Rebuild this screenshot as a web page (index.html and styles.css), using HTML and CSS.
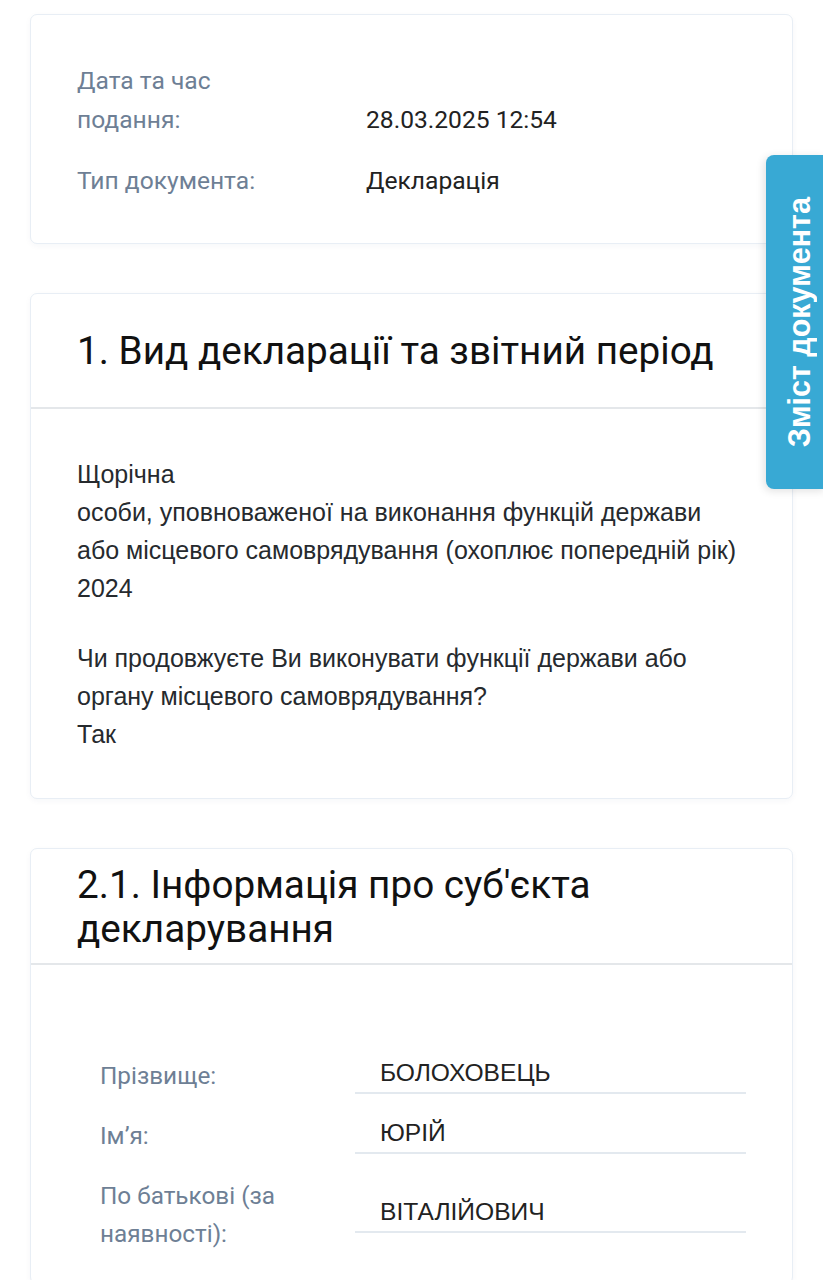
FILE: index.html
```html
<!DOCTYPE html>
<html lang="uk">
<head>
<meta charset="utf-8">
<link rel="stylesheet" href="styles.css">
</head>
<body>
<div class="page">
  <section class="card meta">
    <div class="meta-row">
      <div class="meta-label">Дата та час<br>подання:</div>
      <div class="meta-value">28.03.2025 12:54</div>
    </div>
    <div class="meta-row">
      <div class="meta-label">Тип документа:</div>
      <div class="meta-value">Декларація</div>
    </div>
  </section>

  <section class="card">
    <header class="card-head one-line">
      <h2>1. Вид декларації та звітний період</h2>
    </header>
    <div class="card-body text">
      <p>Щорічна<br>особи, уповноваженої на виконання функцій держави або місцевого самоврядування (охоплює попередній рік)<br>2024</p>
      <p>Чи продовжуєте Ви виконувати функції держави або органу місцевого самоврядування?<br>Так</p>
    </div>
  </section>

  <section class="card">
    <header class="card-head">
      <h2>2.1. Інформація про суб'єкта декларування</h2>
    </header>
    <div class="card-body person">
      <div class="field">
        <div class="field-label">Прізвище:</div>
        <div class="field-value">БОЛОХОВЕЦЬ</div>
      </div>
      <div class="field">
        <div class="field-label">Ім’я:</div>
        <div class="field-value">ЮРІЙ</div>
      </div>
      <div class="field">
        <div class="field-label">По батькові (за наявності):</div>
        <div class="field-value">ВІТАЛІЙОВИЧ</div>
      </div>
    </div>
  </section>
</div>
<div class="toc-tab"><span>Зміст документа</span></div>
</body>
</html>
```
FILE: styles.css
```css
* { box-sizing: border-box; }
html, body { margin: 0; padding: 0; background: #ffffff; }
body {
  font-family: "Liberation Sans", Arial, sans-serif;
  color: #1f2328;
  width: 823px;
  overflow: hidden;
}
.page {
  padding: 14px 30px 0 30px;
  display: flex;
  flex-direction: column;
  gap: 49px;
}
.card {
  border: 1px solid #e8eef5;
  border-radius: 7px;
  background: #fff;
  box-shadow: 0 2px 6px rgba(30, 60, 100, 0.04);
}
.meta {
  padding: 46px 46px 43px 46px;
  display: flex;
  flex-direction: column;
  gap: 22px;
}
.meta-row {
  display: flex;
  align-items: flex-end;
}
.meta-label {
  width: 289px;
  font-family: Roboto, "Liberation Sans", sans-serif;
  font-size: 24.6px;
  line-height: 39px;
  color: #6e7f95;
}
.meta-value {
  font-family: Roboto, "Liberation Sans", sans-serif;
  font-size: 24.6px;
  line-height: 39px;
  color: #222;
}
.card-head {
  border-bottom: 2px solid #e4e7ea;
  padding: 14px 46px 12px 46px;
}
.card-head.one-line {
  padding: 35px 46px 34px 46px;
}
.card-head h2 {
  margin: 0;
  font-family: Roboto, "Liberation Sans", sans-serif;
  font-weight: 400;
  font-size: 38.7px;
  line-height: 44px;
  color: #111;
}
.text {
  padding: 46px 44px 45px 46px;
  font-size: 25px;
  line-height: 38px;
  color: #262a2e;
}
.text p { margin: 0; }
.text p + p { margin-top: 32px; }
.person {
  padding: 92px 46px 30px 69px;
  display: flex;
  flex-direction: column;
  gap: 22px;
}
.field {
  display: flex;
  align-items: center;
}
.field-label {
  width: 255px;
  font-family: Roboto, "Liberation Sans", sans-serif;
  font-size: 24.3px;
  line-height: 38px;
  color: #6e7f95;
  padding-right: 30px;
}
.field-value {
  width: 391px;
  font-family: "Liberation Sans", Arial, sans-serif;
  font-size: 24.6px;
  line-height: 30px;
  color: #222;
  padding: 0 0 4px 25px;
  border-bottom: 2px solid #e3e9ef;
}
.toc-tab {
  position: absolute;
  top: 155px;
  left: 766px;
  width: 60px;
  height: 334px;
  padding-left: 6px;
  background: #38a9d4;
  border-radius: 8px 0 0 8px;
  box-shadow: -2px 2px 8px rgba(0, 0, 0, 0.12);
  display: flex;
  align-items: center;
  justify-content: center;
}
.toc-tab span {
  writing-mode: vertical-rl;
  transform: rotate(180deg);
  color: #fff;
  font-family: "Liberation Sans", Arial, sans-serif;
  font-weight: 700;
  font-size: 30.5px;
  white-space: nowrap;
}
```
